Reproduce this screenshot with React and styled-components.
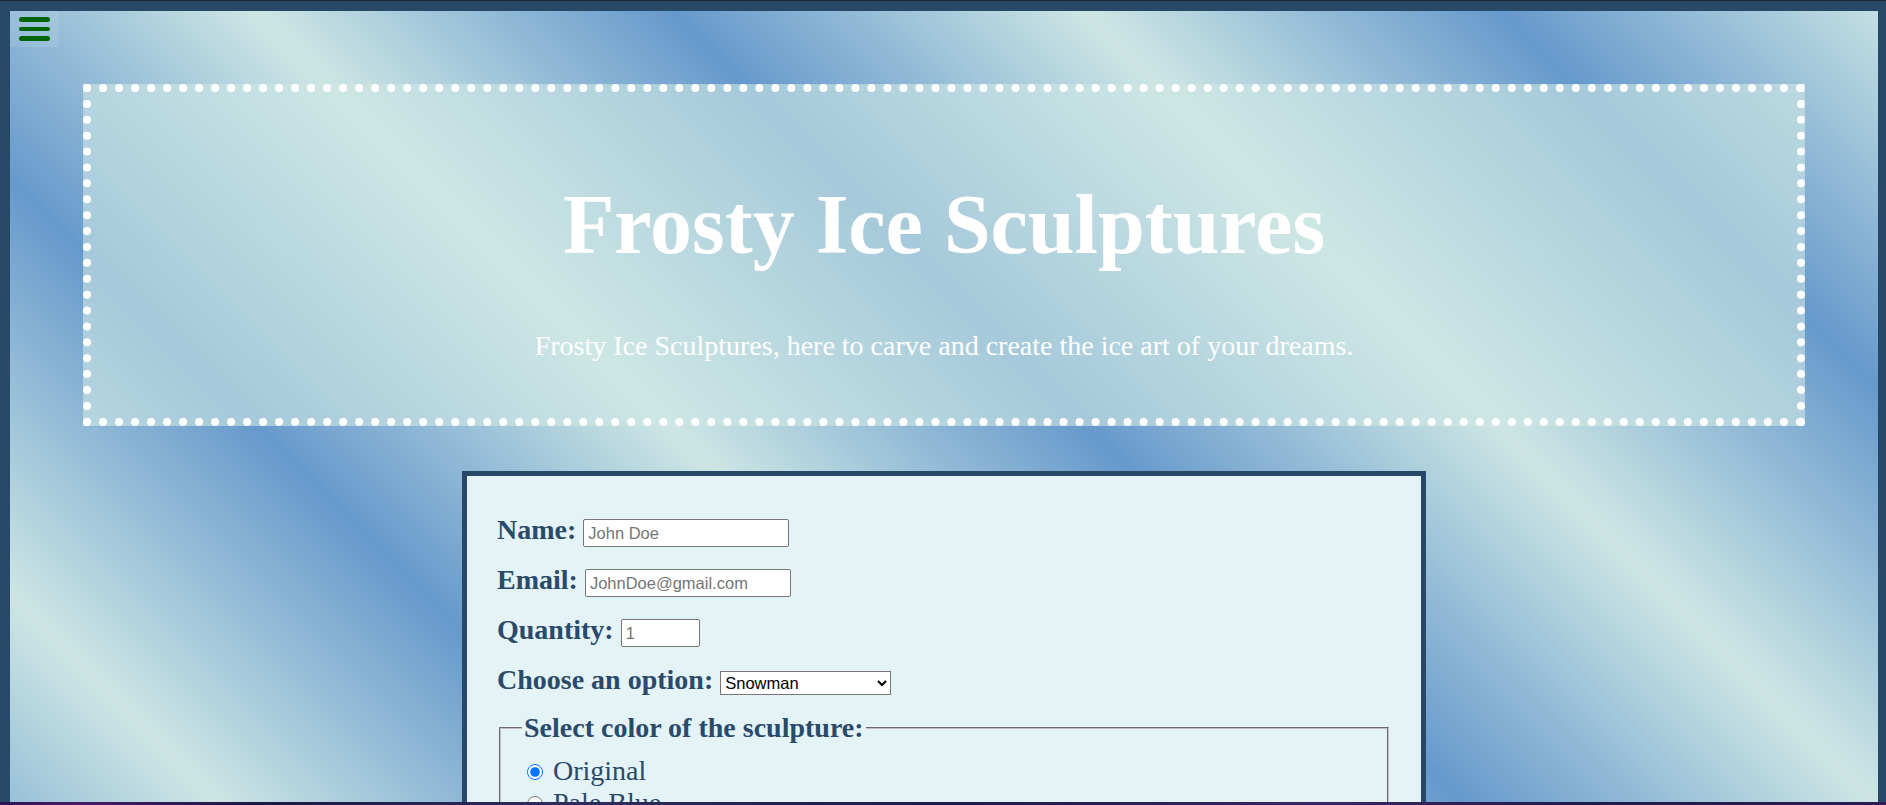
import React from "react";
import styled, { createGlobalStyle } from "styled-components";

const GlobalStyle = createGlobalStyle`
  html, body {
    margin: 0;
    padding: 0;
  }
  html::-webkit-scrollbar, body::-webkit-scrollbar {
    display: none;
  }
  body {
    padding-top: 1px;
    background: #1f2230;
    overflow-x: hidden;
    font-family: "Liberation Serif", "Times New Roman", serif;
    font-size: 28px;
  }
`;

const Page = styled.div`
  position: relative;
  width: 1888px;
  min-height: 1250px;
  box-sizing: border-box;
  border: 10px solid #284868;
  padding-bottom: 80px;
  background: repeating-linear-gradient(
      45deg,
      #cde6e4 155px,
      #6699cc 449px,
      #cde6e4 742px
    )
    fixed;
`;

const MenuButton = styled.button`
  position: absolute;
  top: 0;
  left: 0;
  width: 49px;
  height: 36px;
  padding: 6px 9px;
  box-sizing: border-box;
  display: flex;
  flex-direction: column;
  gap: 5px;
  border: 0;
  background: rgba(255, 255, 255, 0.1);
  cursor: pointer;
`;

const Bar = styled.span`
  display: block;
  width: 31px;
  height: 5px;
  border-radius: 3px;
  background: #006400;
`;

const Banner = styled.header`
  margin: 73px 73px 45px;
  padding: 28px;
  border: 8px dotted #ffffff;
  background: rgba(205, 230, 228, 0.62);
  text-align: center;
  color: #ffffff;
`;

const Title = styled.h1`
  margin: 0.67em 0;
  font-size: 84px;
  font-weight: bold;
`;

const Tagline = styled.p`
  margin: 28px 0;
  font-size: 28px;
`;

const OrderForm = styled.form`
  width: 964px;
  box-sizing: border-box;
  margin: 0 auto;
  padding: 38px 30px 40px;
  border: 5px solid #284868;
  background: #e4f3f6;
  color: #2a4a6b;
`;

const Row = styled.div`
  display: flex;
  align-items: baseline;
  gap: 7px;
  & + & {
    margin-top: 16.6px;
  }
`;

const Label = styled.label`
  font-weight: bold;
  font-size: 28px;
`;

const TextInput = styled.input`
  width: ${(p) => p.$w}px;
  height: 28px;
  box-sizing: border-box;
  padding: 0 4px;
  border: 1px solid #767676;
  border-radius: 2px;
  background: #fff;
  font-family: "Liberation Sans", Arial, sans-serif;
  font-size: 16.5px;
  color: #000;
  &::placeholder {
    color: #757575;
  }
`;

const Select = styled.select`
  width: 171px;
  height: 24px;
  font-family: "Liberation Sans", Arial, sans-serif;
  font-size: 16.5px;
  color: #000;
  background: #fff;
`;

const ColorSet = styled.fieldset`
  margin: 16px 2px 0;
  padding: 0.4em 0.75em 0.625em;
  border: 2px groove #c0c0c0;
  font-size: 28px;
`;

const Legend = styled.legend`
  padding: 0 2px;
  font-weight: bold;
`;

const Option = styled.label`
  display: block;
`;

const Radio = styled.input`
  width: 16px;
  height: 16px;
  margin: 3px 3px 0 5px;
  vertical-align: baseline;
`;

const Submit = styled.button`
  margin-top: 24px;
  padding: 6px 18px;
  font-family: "Liberation Serif", serif;
  font-size: 22px;
  color: #fff;
  background: #284868;
  border: 0;
`;

const BottomGlow = styled.div`
  position: fixed;
  left: 0;
  right: 0;
  bottom: 0;
  height: 3px;
  background: linear-gradient(
    90deg,
    #2a1352 0%,
    #461a66 4%,
    #1b1946 14%,
    #2f2b5e 30%,
    #1c1b4a 50%,
    #3b2463 70%,
    #1d1c48 85%,
    #2c1a55 100%
  );
`;

const colors = ["Original", "Pale Blue", "Crystal Clear", "Frosted White"];

export default function App() {
  return (
    <>
      <GlobalStyle />
      <Page>
        <MenuButton aria-label="menu">
          <Bar />
          <Bar />
          <Bar />
        </MenuButton>
        <Banner>
          <Title>Frosty Ice Sculptures</Title>
          <Tagline>
            Frosty Ice Sculptures, here to carve and create the ice art of your
            dreams.
          </Tagline>
        </Banner>
        <OrderForm onSubmit={(e) => e.preventDefault()}>
          <Row>
            <Label htmlFor="name">Name:</Label>
            <TextInput id="name" type="text" placeholder="John Doe" $w={206} />
          </Row>
          <Row>
            <Label htmlFor="email">Email:</Label>
            <TextInput
              id="email"
              type="email"
              placeholder="JohnDoe@gmail.com"
              $w={206}
            />
          </Row>
          <Row>
            <Label htmlFor="qty">Quantity:</Label>
            <TextInput id="qty" type="number" placeholder="1" $w={79} />
          </Row>
          <Row>
            <Label htmlFor="kind">Choose an option:</Label>
            <Select id="kind" defaultValue="snowman">
              <option value="snowman">Snowman</option>
              <option value="swan">Swan</option>
              <option value="castle">Castle</option>
            </Select>
          </Row>
          <ColorSet>
            <Legend>Select color of the sculpture:</Legend>
            {colors.map((c, i) => (
              <Option key={c}>
                <Radio type="radio" name="color" defaultChecked={i === 0} /> {c}
              </Option>
            ))}
          </ColorSet>
          <Submit type="submit">Submit</Submit>
        </OrderForm>
      </Page>
      <BottomGlow />
    </>
  );
}
